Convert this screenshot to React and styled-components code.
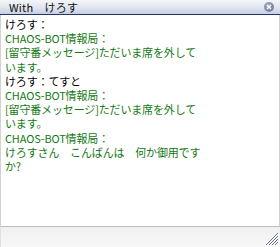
import React from "react";
import styled, { createGlobalStyle } from "styled-components";

const Global = createGlobalStyle`
  html, body { margin: 0; padding: 0; background: #fff; }
  body { width: 280px; height: 247px; overflow: hidden; }
`;

const Window = styled.div`
  width: 280px;
  height: 247px;
  display: flex;
  flex-direction: column;
  box-sizing: border-box;
  font-family: "Noto Sans CJK JP", "Liberation Sans", sans-serif;
`;

const TitleBar = styled.div`
  position: relative;
  height: 14px;
  flex: none;
  display: flex;
  align-items: center;
  padding-left: 9px;
  background: linear-gradient(to bottom, #f4f5f8 0%, #e2e6ee 50%, #c6d0e6 100%);
  border-bottom: 1px solid #26365e;
  font-size: 11px;
  color: #111;
  white-space: nowrap;
`;

const TitleText = styled.span`
  line-height: 14px;
  letter-spacing: 0.2px;
`;

const Close = styled.div`
  position: absolute;
  right: 6px;
  top: 2px;
  width: 10px;
  height: 10px;
  border-radius: 50%;
  background: radial-gradient(circle at 40% 35%, #a9b3c8, #5d6a86);
  display: flex;
  align-items: center;
  justify-content: center;
`;

const Content = styled.div`
  flex: 1;
  background: #fff;
  border-left: 1px solid #d2d2d2;
  border-right: 1px solid #d2d2d2;
  padding: 2px 0 0 4px;
  overflow: hidden;
`;

const Line = styled.div`
  font-size: 11px;
  line-height: 14.2px;
  height: 14.2px;
  white-space: nowrap;
  letter-spacing: -0.15px;
  color: ${(p) => (p.$bot ? "#137a13" : "#000")};
`;

const Footer = styled.div`
  position: relative;
  height: 20px;
  flex: none;
  border-top: 1px solid #bdbdbd;
  background: linear-gradient(to bottom, #f0f0f0, #f7f7f7);
  border-left: 1px solid #e0e0e0;
`;

const Grip = styled.svg`
  position: absolute;
  right: 1px;
  bottom: 1px;
`;

const lines = [
  { t: "けろす：", bot: false },
  { t: "CHAOS-BOT情報局：", bot: true },
  { t: "[留守番メッセージ]ただいま席を外して", bot: true },
  { t: "います。", bot: true },
  { t: "けろす：てすと", bot: false },
  { t: "CHAOS-BOT情報局：", bot: true },
  { t: "[留守番メッセージ]ただいま席を外して", bot: true },
  { t: "います。", bot: true },
  { t: "CHAOS-BOT情報局：", bot: true },
  { t: "けろすさん　こんばんは　何か御用です", bot: true },
  { t: "か?", bot: true },
];

export default function App() {
  return (
    <>
      <Global />
      <Window>
        <TitleBar>
          <TitleText>With　けろす</TitleText>
          <Close>
            <svg width="6" height="6" viewBox="0 0 6 6">
              <path d="M1 1L5 5M5 1L1 5" stroke="#fff" strokeWidth="1.2" />
            </svg>
          </Close>
        </TitleBar>
        <Content>
          {lines.map((l, i) => (
            <Line key={i} $bot={l.bot}>
              {l.t}
            </Line>
          ))}
        </Content>
        <Footer>
          <Grip width="14" height="14" viewBox="0 0 14 14">
            <path d="M13 1L1 13M13 4L4 13M13 7L7 13M13 10L10 13" stroke="#6b7590" strokeWidth="1" />
          </Grip>
        </Footer>
      </Window>
    </>
  );
}
